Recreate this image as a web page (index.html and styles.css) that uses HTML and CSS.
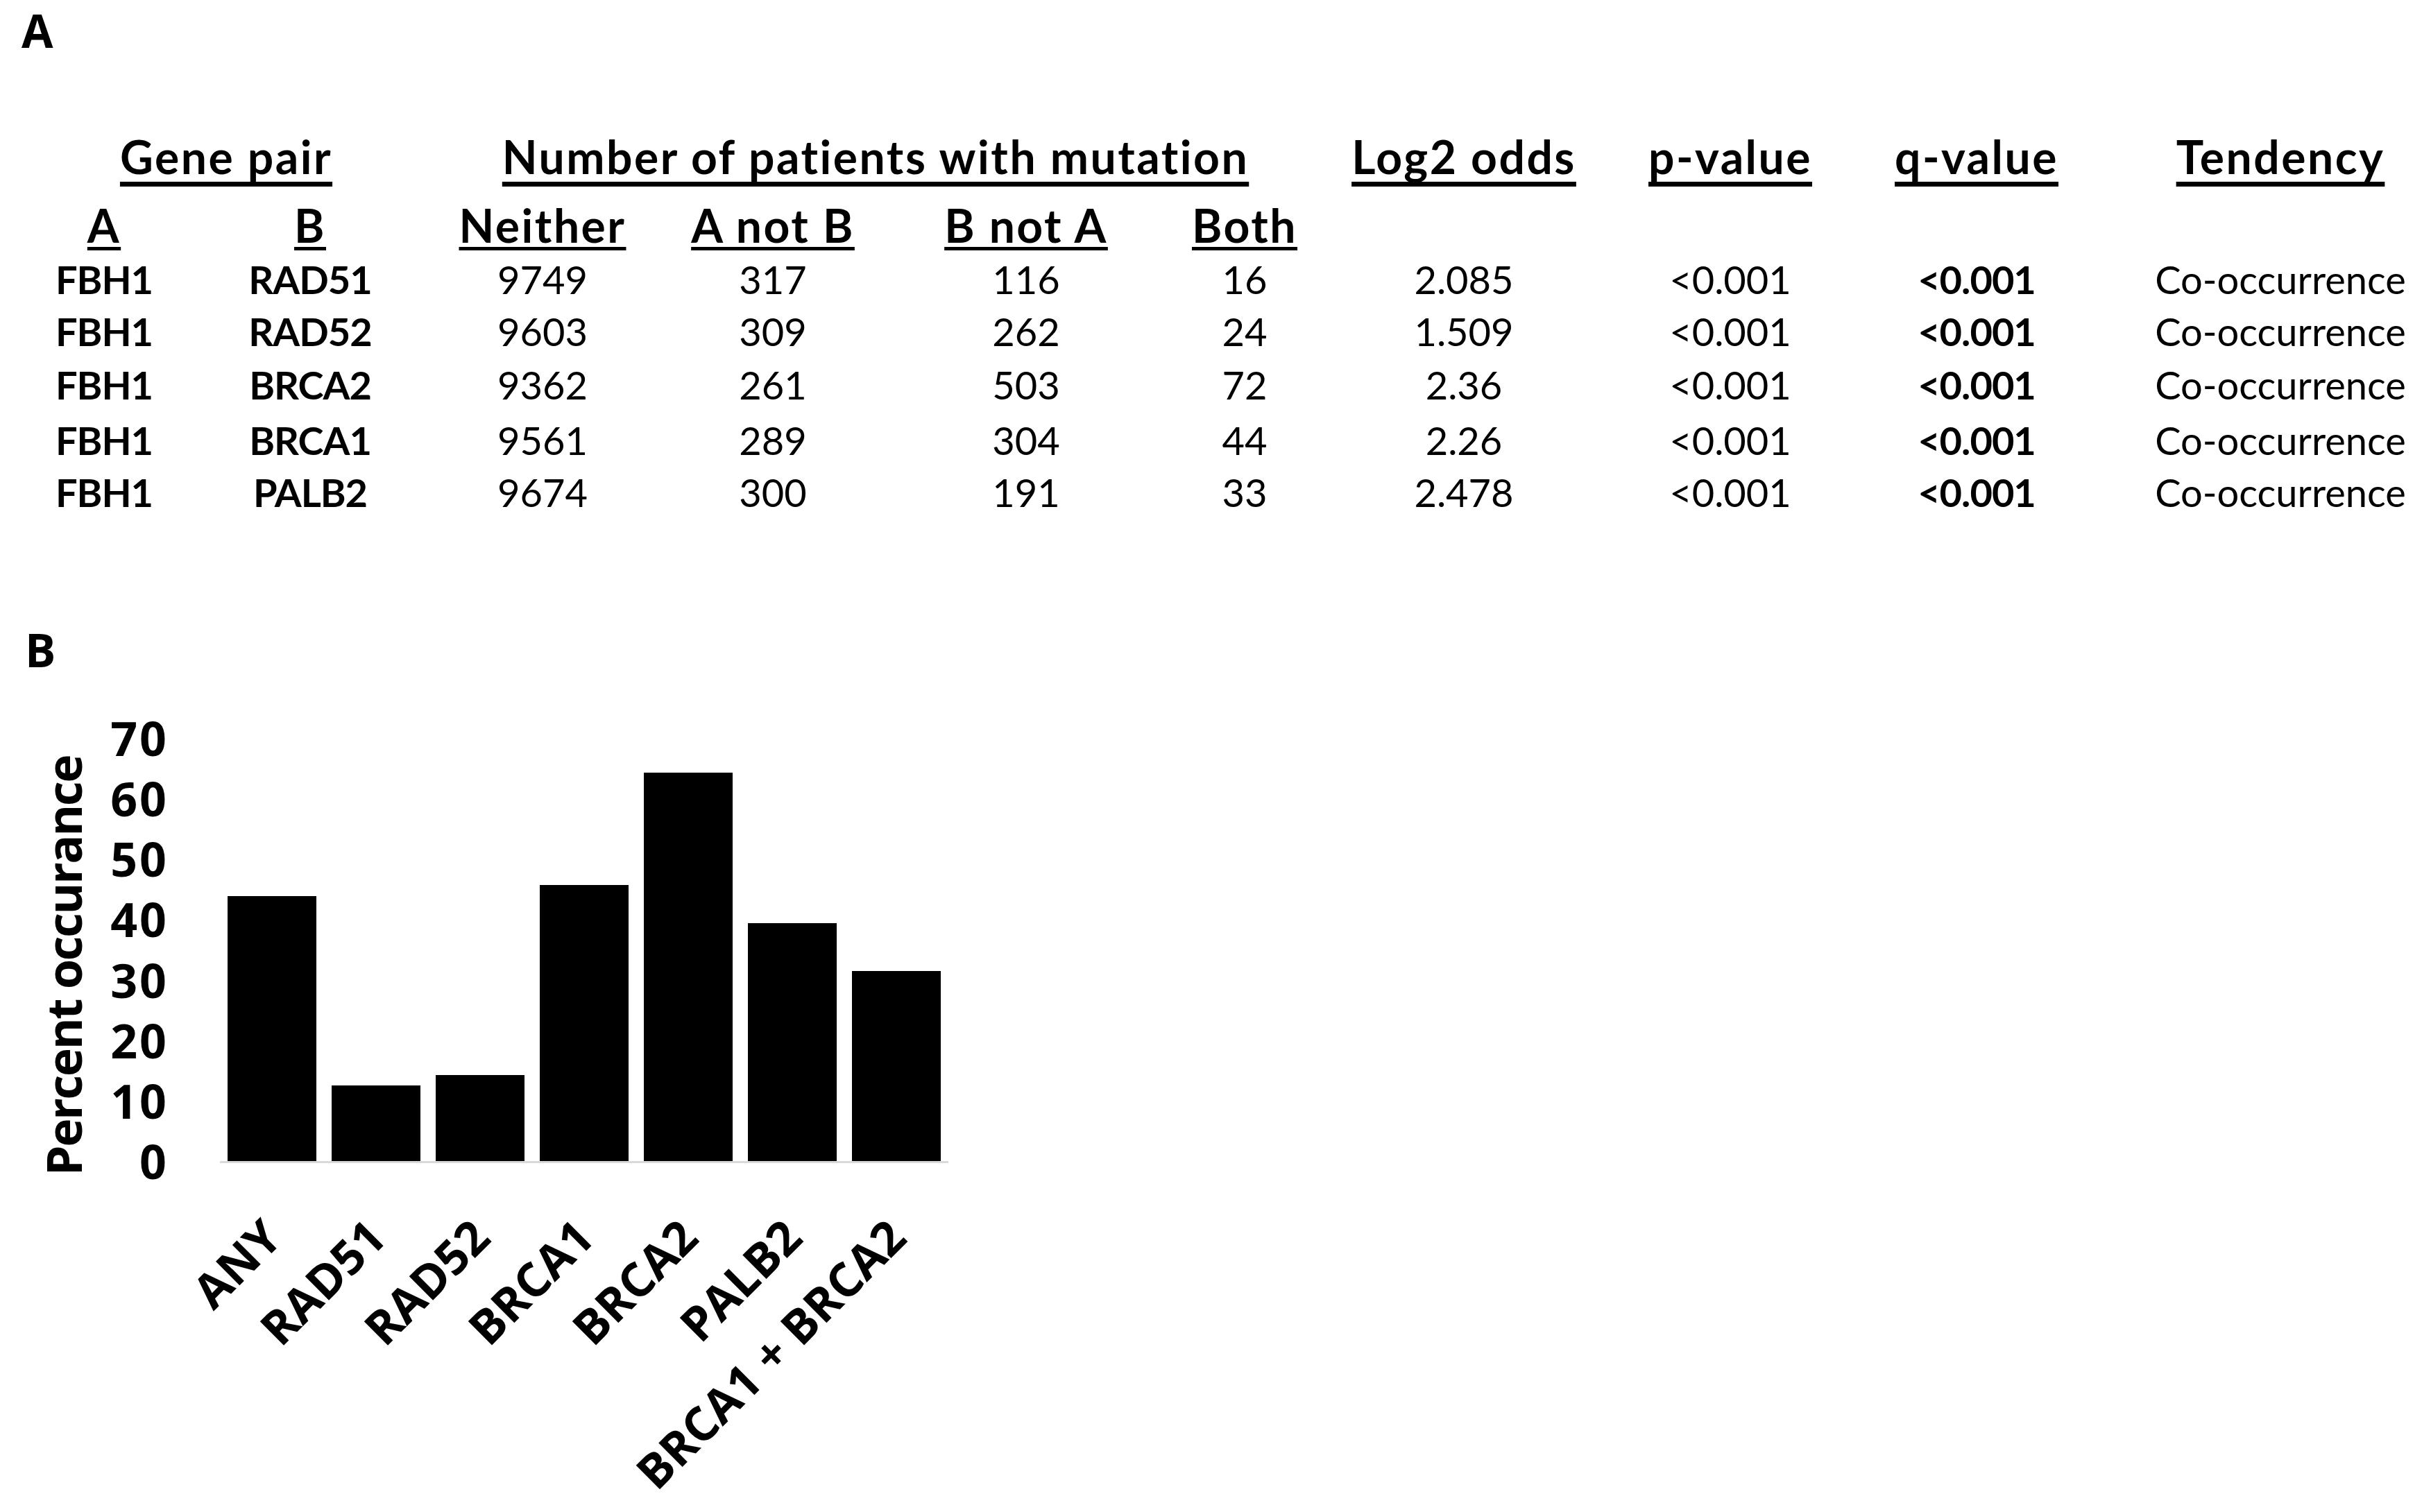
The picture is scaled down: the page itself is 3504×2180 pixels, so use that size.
FILE: index.html
```html
<!DOCTYPE html>
<html lang="en">
<head>
<meta charset="utf-8">
<title>FBH1 co-occurrence with homologous recombination genes</title>
<link rel="stylesheet" href="styles.css">
</head>
<body>
<main class="figure">
  <section class="panel panel-a">
    <div class="panel-label">A</div>
    <div class="table">
      <div class="th span-2 gene-pair"><span class="u1">Gene pair</span></div>
      <div class="th span-4 num-pat"><span class="u1">Number of patients with mutation</span></div>
      <div class="th"><span class="u1">Log2 odds</span></div>
      <div class="th"><span class="u1">p-value</span></div>
      <div class="th"><span class="u1">q-value</span></div>
      <div class="th"><span class="u1">Tendency</span></div>

      <div class="th row-start"><span class="u2">A</span></div>
      <div class="th"><span class="u2">B</span></div>
      <div class="th"><span class="u2">Neither</span></div>
      <div class="th"><span class="u2">A not B</span></div>
      <div class="th"><span class="u2">B not A</span></div>
      <div class="th"><span class="u2">Both</span></div>

      <div class="td b row-start">FBH1</div><div class="td b">RAD51</div><div class="td">9749</div><div class="td">317</div><div class="td">116</div><div class="td">16</div><div class="td">2.085</div><div class="td">&lt;0.001</div><div class="td b">&lt;0.001</div><div class="td">Co-occurrence</div>
      <div class="td b row-start">FBH1</div><div class="td b">RAD52</div><div class="td">9603</div><div class="td">309</div><div class="td">262</div><div class="td">24</div><div class="td">1.509</div><div class="td">&lt;0.001</div><div class="td b">&lt;0.001</div><div class="td">Co-occurrence</div>
      <div class="td b row-start">FBH1</div><div class="td b">BRCA2</div><div class="td">9362</div><div class="td">261</div><div class="td">503</div><div class="td">72</div><div class="td">2.36</div><div class="td">&lt;0.001</div><div class="td b">&lt;0.001</div><div class="td">Co-occurrence</div>
      <div class="td b row-start">FBH1</div><div class="td b">BRCA1</div><div class="td">9561</div><div class="td">289</div><div class="td">304</div><div class="td">44</div><div class="td">2.26</div><div class="td">&lt;0.001</div><div class="td b">&lt;0.001</div><div class="td">Co-occurrence</div>
      <div class="td b row-start">FBH1</div><div class="td b">PALB2</div><div class="td">9674</div><div class="td">300</div><div class="td">191</div><div class="td">33</div><div class="td">2.478</div><div class="td">&lt;0.001</div><div class="td b">&lt;0.001</div><div class="td">Co-occurrence</div>
    </div>
  </section>

  <section class="panel panel-b">
    <div class="panel-label">B</div>
    <div class="chart">
      <div class="y-title">Percent occurance</div>
      <div class="ticks">
        <span>70</span><span>60</span><span>50</span><span>40</span><span>30</span><span>20</span><span>10</span><span>0</span>
      </div>
      <div class="plot-col">
        <div class="plot">
          <div class="bar" style="--v:43.8"></div>
          <div class="bar" style="--v:12.5"></div>
          <div class="bar" style="--v:14.2"></div>
          <div class="bar" style="--v:45.7"></div>
          <div class="bar" style="--v:64.3"></div>
          <div class="bar" style="--v:39.4"></div>
          <div class="bar" style="--v:31.4"></div>
        </div>
        <div class="xlabels">
          <div class="xl"><span>ANY</span></div>
          <div class="xl"><span>RAD51</span></div>
          <div class="xl"><span>RAD52</span></div>
          <div class="xl"><span>BRCA1</span></div>
          <div class="xl"><span>BRCA2</span></div>
          <div class="xl"><span>PALB2</span></div>
          <div class="xl"><span>BRCA1 + BRCA2</span></div>
        </div>
      </div>
    </div>
  </section>
</main>
</body>
</html>
```
FILE: styles.css
```css
html {
  overflow: hidden;
}

body {
  margin: 0;
  width: 3504px;
  height: 2180px;
  overflow: hidden;
  background: #ffffff;
  color: #000000;
}

.panel-label {
  font-family: "Open Sans", "Liberation Sans", sans-serif;
  font-weight: 700;
  font-size: 66px;
  line-height: 66px;
}

.panel-a .panel-label {
  margin-top: 10px;
  padding-left: 31px;
}

/* ---------- Table (panel A) ---------- */
.table {
  margin-top: 100px;
  display: grid;
  grid-template-columns: 300px 294px 376px 288px 442px 188px 444px 324px 386px 490px;
  grid-template-rows: 99px 89px 75px 77px 80px 75px 77px;
  font-family: Lato, "Liberation Sans", sans-serif;
}

.th,
.td {
  text-align: center;
  white-space: nowrap;
}

.th {
  font-weight: 700;
  font-size: 66px;
  line-height: 100px;
  letter-spacing: 2.5px;
}

.td {
  font-weight: 400;
  font-size: 56px;
  line-height: 77px;
}

.td.b {
  font-weight: 700;
  letter-spacing: -1px;
}

.span-2 {
  grid-column: span 2;
}

.span-4 {
  grid-column: span 4;
}

.gene-pair {
  padding-left: 58px;
}

.num-pat {
  padding-left: 42px;
}

.row-start {
  grid-column-start: 1;
}

.u1 {
  text-decoration: underline;
  text-decoration-thickness: 7px;
  text-underline-offset: 11px;
  text-decoration-skip-ink: none;
}

.u2 {
  text-decoration: underline;
  text-decoration-thickness: 5px;
  text-underline-offset: 6px;
  text-decoration-skip-ink: none;
}

/* ---------- Chart (panel B) ---------- */
.panel-b .panel-label {
  margin-top: 155px;
  padding-left: 36px;
}

.chart {
  margin-top: 55px;
  display: flex;
  align-items: flex-start;
  font-family: "Open Sans", "Liberation Sans", sans-serif;
  font-weight: 700;
}

.y-title {
  margin-left: 56px;
  margin-top: 66px;
  width: 70px;
  writing-mode: vertical-rl;
  transform: rotate(180deg);
  font-size: 70px;
  line-height: 70px;
  letter-spacing: -2.5px;
  white-space: nowrap;
}

.ticks {
  width: 114px;
  height: 690px;
  display: flex;
  flex-direction: column;
  justify-content: space-between;
  align-items: flex-end;
  font-size: 68px;
  line-height: 80px;
  letter-spacing: 3px;
}

.ticks span {
  margin-right: -3px;
}

.plot-col {
  margin-left: 77px;
  width: 1050px;
}

.plot {
  margin-top: 40px;
  height: 610px;
  border-bottom: 3px solid #d9d9d9;
  display: flex;
  align-items: flex-end;
}

.bar {
  width: 128px;
  margin: 0 11px;
  height: calc(var(--v) / 70 * 100%);
  background: #000000;
}

.xlabels {
  display: flex;
}

.xl {
  width: 150px;
  padding-right: 75px;
  box-sizing: border-box;
  display: flex;
  justify-content: flex-end;
  margin-top: 59px;
}

.xl span {
  flex: none;
  white-space: nowrap;
  font-size: 68px;
  line-height: 68px;
  transform-origin: 100% 50%;
  transform: rotate(-45deg);
}
```
